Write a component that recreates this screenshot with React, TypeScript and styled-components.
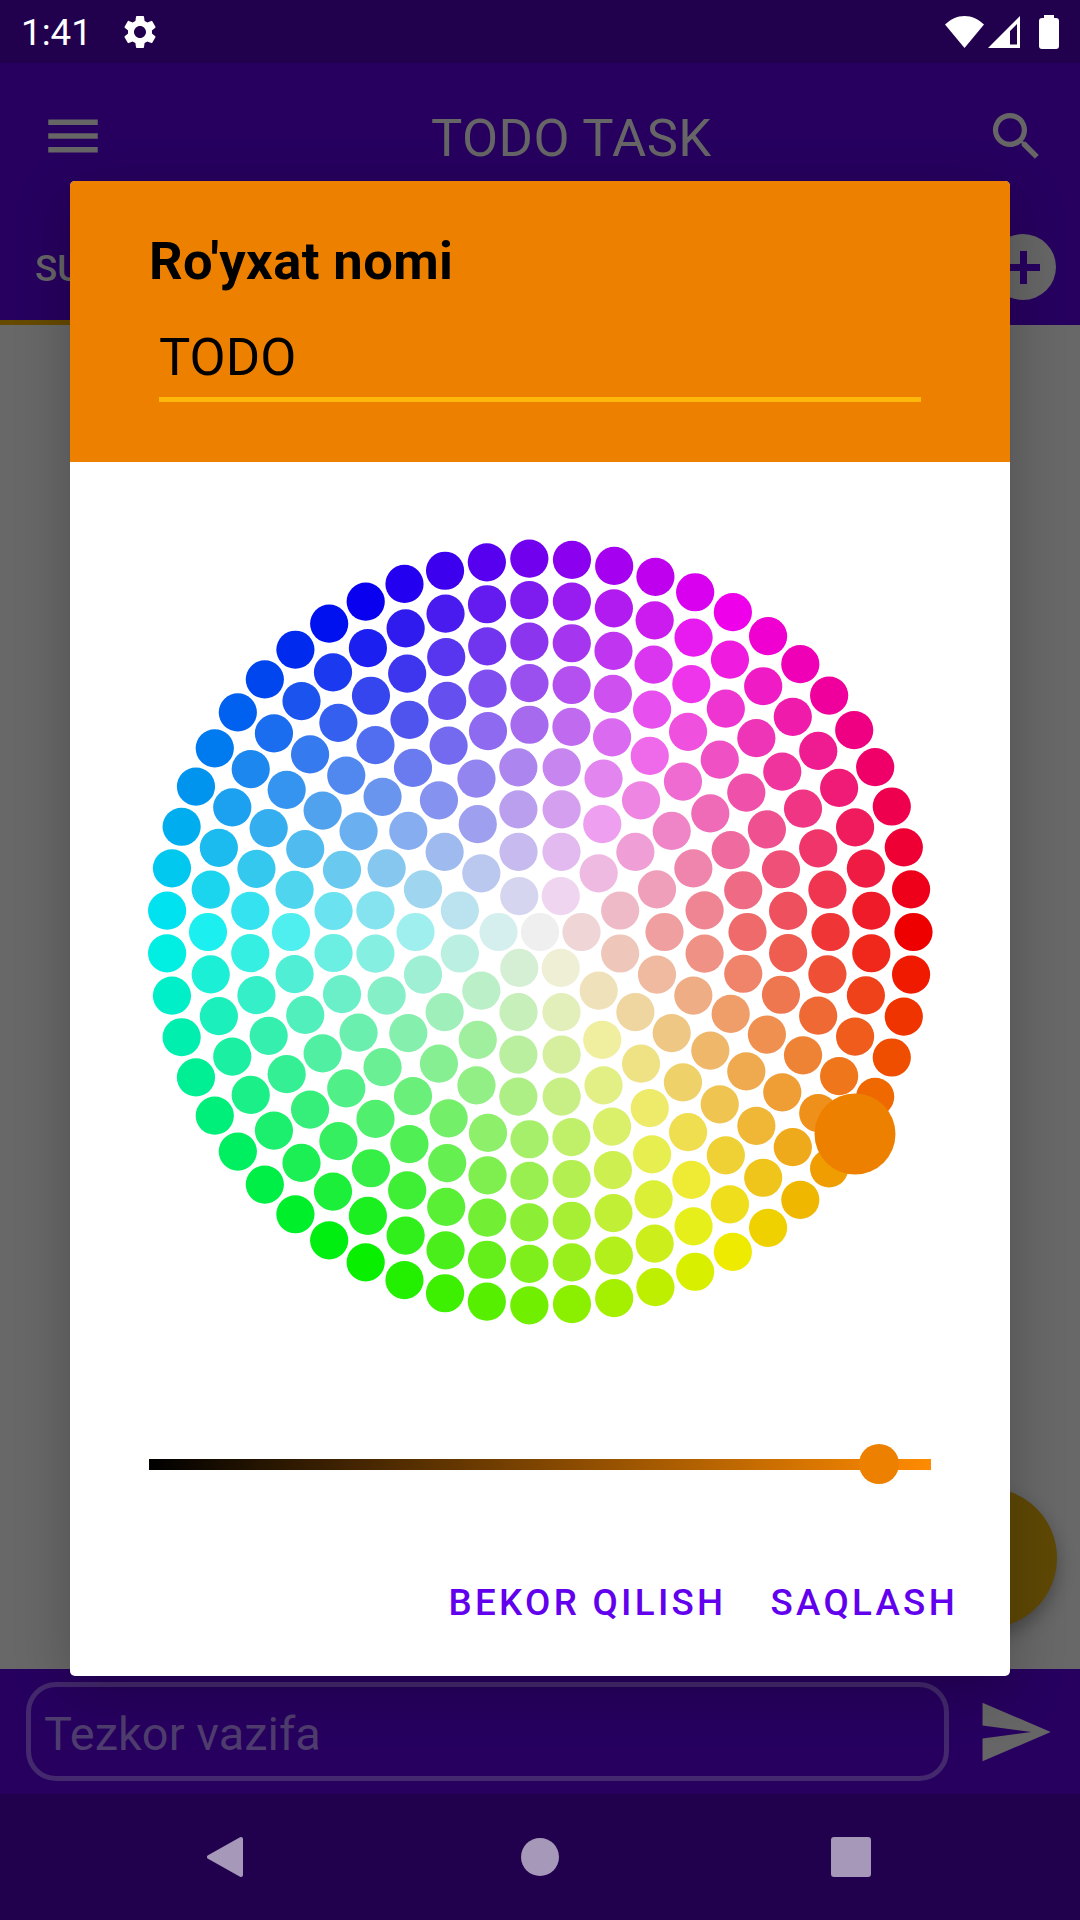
import React from "react";
import styled, { createGlobalStyle } from "styled-components";
import { MdMenu, MdSearch, MdSend, MdSettings } from "react-icons/md";

const GlobalStyle = createGlobalStyle`
  html, body {
    margin: 0;
    padding: 0;
    background: #666;
  }
  * {
    box-sizing: border-box;
  }
`;

const Screen = styled.div`
  position: relative;
  width: 1080px;
  height: 1920px;
  display: flex;
  flex-direction: column;
  overflow: hidden;
  font-family: Roboto, "Liberation Sans", sans-serif;
`;

const StatusBar = styled.div`
  height: 63px;
  flex: none;
  display: flex;
  align-items: center;
  padding: 0 21px;
  background: #21004e;
  color: #fff;
`;

const Clock = styled.span`
  font-size: 36.75px;
  line-height: 44px;
  margin-top: 2px;
`;

const GearIcon = styled(MdSettings)`
  width: 40px;
  height: 40px;
  margin-left: 28px;
`;

const StatusIcons = styled.div`
  margin-left: auto;
  display: flex;
  align-items: center;
  fill: #fff;
`;

const WifiIcon = styled.svg`
  width: 39px;
  height: 32px;
  margin-right: 4px;
`;

const SignalIcon = styled.svg`
  width: 32px;
  height: 32px;
  margin-right: 19px;
`;

const BatteryIcon = styled.svg`
  width: 20px;
  height: 34px;
`;

const AppBar = styled.div`
  flex: none;
  background: #27005f;
  color: #666;
`;

const Toolbar = styled.div`
  height: 144px;
  display: flex;
  align-items: flex-start;
  padding: 40px 32px 0 40px;
`;

const MenuIcon = styled(MdMenu)`
  width: 66px;
  height: 66px;
`;

const AppTitle = styled.div`
  margin: 4px 0 0 325px;
  font-size: 52.5px;
  line-height: 62px;
  letter-spacing: 0.4px;
`;

const SearchIcon = styled(MdSearch)`
  width: 63px;
  height: 63px;
  margin: 2px 0 0 auto;
`;

const TabRow = styled.div`
  height: 118px;
  display: flex;
  align-items: flex-start;
`;

const Tab = styled.div`
  width: 160px;
  height: 118px;
  padding: 40px 0 0 35px;
  border-bottom: 5px solid #664a00;
  font-size: 36.75px;
  font-weight: 500;
  line-height: 44px;
`;

const AddButton = styled.div`
  width: 66px;
  height: 66px;
  margin: 27px 24px 0 auto;
  display: flex;
  align-items: center;
  justify-content: center;
  border-radius: 50%;
  background: #666;
  fill: #27005f;

  svg {
    width: 33px;
    height: 33px;
  }
`;

const Content = styled.div`
  position: relative;
  flex: 1;
  background: #686868;
`;

const Fab = styled.div`
  position: absolute;
  right: 23px;
  bottom: 41px;
  width: 140px;
  height: 140px;
  border-radius: 50%;
  background: #5f4805;
  box-shadow: 0 8px 18px rgba(0, 0, 0, 0.3);
`;

const QuickBar = styled.div`
  height: 125px;
  flex: none;
  display: flex;
  align-items: center;
  padding-left: 26px;
  background: #27005f;
`;

const QuickInput = styled.div`
  width: 923px;
  height: 99px;
  padding: 4px 0 0 13px;
  display: flex;
  align-items: center;
  border: 5px solid #44296e;
  border-radius: 30px;
  color: #4e3d6e;
  font-size: 47px;
  line-height: 56px;
`;

const SendIcon = styled(MdSend)`
  width: 78px;
  height: 78px;
  margin-left: 27px;
  color: #666;
`;

const NavBar = styled.div`
  height: 126px;
  flex: none;
  display: flex;
  align-items: center;
  padding-left: 207px;
  background: #21004e;
  fill: #a698b8;
`;

const BackIcon = styled.svg`
  width: 36px;
  height: 44px;
`;

const HomeDot = styled.div`
  width: 38px;
  height: 38px;
  margin-left: 278px;
  border-radius: 50%;
  background: #a698b8;
`;

const RecentSquare = styled.div`
  width: 40px;
  height: 40px;
  margin-left: 272px;
  border-radius: 3px;
  background: #a698b8;
`;

const Dialog = styled.div`
  position: absolute;
  left: 70px;
  top: 181px;
  width: 940px;
  height: 1495px;
  border-radius: 5px;
  overflow: hidden;
  background: #fff;
`;

const DialogShadow = styled.div`
  position: absolute;
  left: 70px;
  top: 181px;
  width: 940px;
  height: 1495px;
  border-radius: 5px;
  box-shadow: 0 14px 55px rgba(0, 0, 0, 0.24);
`;

const DialogHeader = styled.div`
  height: 281px;
  padding: 49px 89px 0 79px;
  background: #ee8000;
  color: #000;
`;

const DialogTitle = styled.div`
  font-size: 52.5px;
  font-weight: 700;
  line-height: 62px;
  letter-spacing: 0.4px;
`;

const NameField = styled.div`
  margin: 34px 0 0 10px;
  height: 76px;
  border-bottom: 5px solid #ffb80a;
  font-size: 52.5px;
  line-height: 62px;
`;

const DialogBody = styled.div`
  padding: 79px 79px 0;
`;

const Wheel = styled.svg`
  display: block;
  width: 782px;
  height: 782px;
  overflow: visible;
`;

const Slider = styled.div`
  position: relative;
  height: 11px;
  margin-top: 136px;
  background: linear-gradient(90deg, #000, #ff8b00);
`;

const SliderThumb = styled.div`
  position: absolute;
  top: -15px;
  width: 40px;
  height: 40px;
  border-radius: 50%;
  background: #ee8000;
`;

const DialogActions = styled.div`
  margin: 111px -27px 0 0;
  display: flex;
  justify-content: flex-end;
  gap: 44px;
`;

const ActionButton = styled.div`
  color: #6200ee;
  font-size: 36.75px;
  font-weight: 500;
  line-height: 44px;
  letter-spacing: 0.0892857em;
`;

// same ring layout as the android flower/simple wheel renderer
const DENSITY = 10;
const MAX_RADIUS = 373.5;
const DOT_SLOT = MAX_RADIUS / (DENSITY - 1) / 2;
const DOT_RADIUS = 19.1;
const LIGHTNESS = 0.938;
const HALF = 391;

const hsvToRgb = (h: number, s: number, v: number) => {
  const f = (n: number) => {
    const k = (n + h / 60) % 6;
    return Math.round(255 * (v - v * s * Math.max(0, Math.min(k, 4 - k, 1))));
  };
  return `rgb(${f(5)}, ${f(3)}, ${f(1)})`;
};

const buildDots = () => {
  const dots: { x: number; y: number; color: string }[] = [];
  for (let i = 0; i < DENSITY; i++) {
    const radius = (MAX_RADIUS * i) / (DENSITY - 1);
    const total =
      i === 0
        ? 1
        : Math.max(
            1,
            Math.floor(
              (0.975 * Math.PI) / Math.asin(DOT_SLOT / radius) + 0.5
            )
          );
    for (let j = 0; j < total; j++) {
      const angle =
        (Math.PI * 2 * j) / total + (Math.PI / total) * ((i + 1) % 2);
      dots.push({
        x: HALF + radius * Math.cos(angle),
        y: HALF + radius * Math.sin(angle),
        color: hsvToRgb(
          (angle * 180) / Math.PI,
          radius / MAX_RADIUS,
          LIGHTNESS
        ),
      });
    }
  }
  return dots;
};

const dots = buildDots();

export default function App() {
  return (
    <>
      <GlobalStyle />
      <Screen>
        <StatusBar>
          <Clock>1:41</Clock>
          <GearIcon />
          <StatusIcons>
            <WifiIcon viewBox="0 0 39 32">
              <path d="M19.5 32L0 8.6C5.5 3.2 12.2 0 19.5 0S33.5 3.2 39 8.6Z" />
            </WifiIcon>
            <SignalIcon viewBox="0 0 32 32">
              <path
                fillRule="evenodd"
                d="M0 32L32 0V32ZM22 28.5H29V8L22 15Z"
              />
            </SignalIcon>
            <BatteryIcon viewBox="0 0 20 34">
              <path d="M5 0H15V3H17A3 3 0 0 1 20 6V31A3 3 0 0 1 17 34H3A3 3 0 0 1 0 31V6A3 3 0 0 1 3 3H5Z" />
            </BatteryIcon>
          </StatusIcons>
        </StatusBar>

        <AppBar>
          <Toolbar>
            <MenuIcon />
            <AppTitle>TODO TASK</AppTitle>
            <SearchIcon />
          </Toolbar>
          <TabRow>
            <Tab>SU</Tab>
            <AddButton>
              <svg viewBox="0 0 33 33">
                <path d="M13 0h7v13h13v7H20v13h-7V20H0v-7h13z" />
              </svg>
            </AddButton>
          </TabRow>
        </AppBar>

        <Content>
          <Fab />
        </Content>

        <QuickBar>
          <QuickInput>Tezkor vazifa</QuickInput>
          <SendIcon />
        </QuickBar>

        <NavBar>
          <BackIcon viewBox="0 0 36 44">
            <path
              d="M34 4V40L2 22Z"
              stroke="#a698b8"
              strokeWidth="4"
              strokeLinejoin="round"
            />
          </BackIcon>
          <HomeDot />
          <RecentSquare />
        </NavBar>

        <DialogShadow />
        <Dialog>
          <DialogHeader>
            <DialogTitle>Ro'yxat nomi</DialogTitle>
            <NameField>TODO</NameField>
          </DialogHeader>
          <DialogBody>
            <Wheel viewBox="0 0 782 782">
              {dots.map((dot, index) => (
                <circle
                  key={index}
                  cx={dot.x}
                  cy={dot.y}
                  r={DOT_RADIUS}
                  fill={dot.color}
                />
              ))}
              <circle cx={706} cy={593} r={40.5} fill="#ee8000" />
            </Wheel>
            <Slider>
              <SliderThumb style={{ left: `${0.933 * 782 - 20}px` }} />
            </Slider>
            <DialogActions>
              <ActionButton>BEKOR QILISH</ActionButton>
              <ActionButton>SAQLASH</ActionButton>
            </DialogActions>
          </DialogBody>
        </Dialog>
      </Screen>
    </>
  );
}
